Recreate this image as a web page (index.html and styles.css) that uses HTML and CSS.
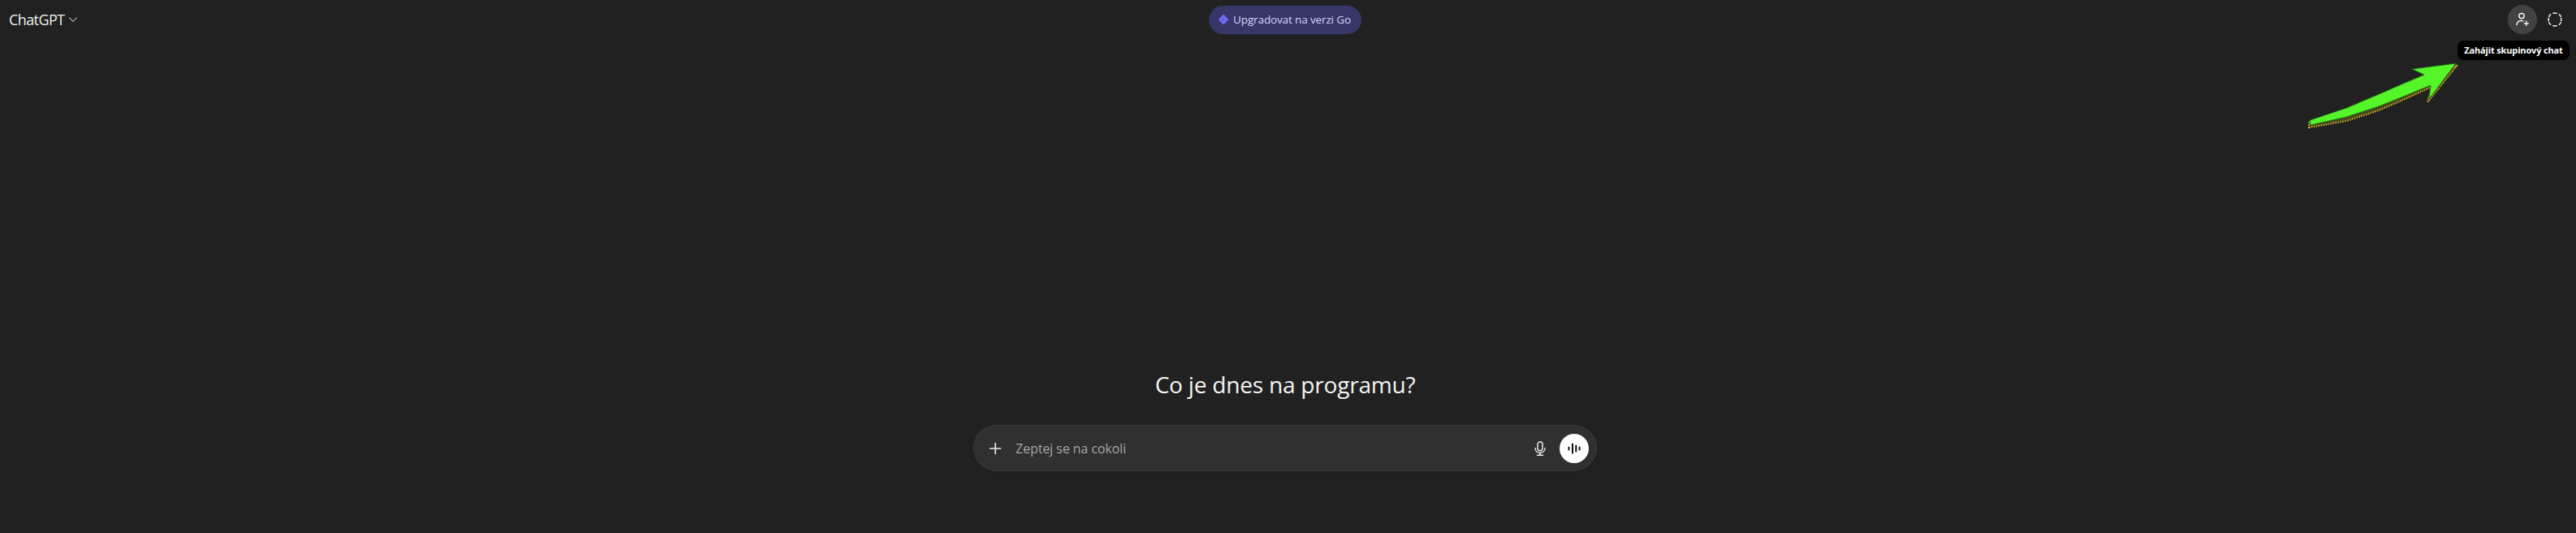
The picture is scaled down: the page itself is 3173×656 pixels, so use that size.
FILE: index.html
```html
<!DOCTYPE html>
<html lang="cs">
<head>
<meta charset="utf-8">
<title>ChatGPT</title>
<link rel="stylesheet" href="styles.css">
</head>
<body>
<div class="page">
  <header class="topbar">
    <div class="topbar-left">
      <span class="model">ChatGPT</span>
      <svg class="chevron" width="12" height="12" viewBox="0 0 12 12" fill="none"><path d="M1.5 3.8 6 8.3l4.500-4.500" stroke="#a8a8a8" stroke-width="1.2" stroke-linecap="round" stroke-linejoin="round"/></svg>
    </div>
    <div class="upgrade">
      <svg width="14" height="14" viewBox="0 0 14 14"><path d="M7 2 12 7 7 12 2 7Z" fill="#6f6cf0" stroke="#6f6cf0" stroke-width="2" stroke-linejoin="round"/><path d="M5.400 7h3.200" stroke="#4a48b0" stroke-width="1"/></svg>
      <span>Upgradovat na verzi Go</span>
    </div>
    <div class="topbar-right">
      <div class="iconbtn active">
        <svg width="20" height="20" viewBox="0 0 20 20" fill="none" stroke="#f0f0f0" stroke-width="1.500" stroke-linecap="round"><circle cx="9" cy="5.600" r="3.200"/><path d="M3 16.500c.3-3.200 2.600-5 5.600-5 .9 0 1.600.1 2.300.4"/><path d="M14.800 12.200v5M12.300 14.700h5"/></svg>
      </div>
      <div class="iconbtn">
        <svg width="20" height="20" viewBox="0 0 20 20" fill="none" stroke="#e8e8e8" stroke-width="1.600" stroke-linecap="round"><path d="M7.800 2.300h4.400"/><path d="M15.400 3.800c.9.7 1.500 1.500 1.800 2.600"/><path d="M17.700 8.600v2.800"/><path d="M17.200 13.600c-.3 1.100-.9 1.900-1.800 2.600"/><path d="M12.200 17.700H7.800"/><path d="M4.600 16.200c-.9-.7-1.500-1.500-1.800-2.600"/><path d="M2.300 11.400V8.600"/><path d="M2.800 6.400c.3-1.100.9-1.900 1.800-2.600"/></svg>
      </div>
    </div>
  </header>
  <main class="content">
    <h1 class="title">Co je dnes na programu?</h1>
    <div class="composer">
      <svg class="plus" width="20" height="20" viewBox="0 0 20 20" fill="none" stroke="#ececec" stroke-width="1.600" stroke-linecap="round"><path d="M10 3.500v13M3.500 10h13"/></svg>
      <span class="placeholder">Zeptej se na cokoli</span>
      <svg class="mic" width="20" height="20" viewBox="0 0 20 20" fill="none" stroke="#e8e8e8" stroke-width="1.500" stroke-linecap="round"><rect x="7" y="1.800" width="6" height="11" rx="3"/><path d="M4 9.500c0 3.500 2.700 5.800 6 5.800s6-2.300 6-5.800"/><path d="M10 15.300v2.700M6.500 18.200h7"/></svg>
      <div class="voice">
        <svg width="20" height="20" viewBox="0 0 20 20" fill="none" stroke="#0d0d0d" stroke-width="2" stroke-linecap="round"><path d="M3.500 8.500v3M8 4.500v11M12.300 6.500v7M16.600 8.500v3"/></svg>
      </div>
    </div>
  </main>
  <div class="tooltip">Zahájit skupinový chat</div>
  <svg class="arrow" width="220" height="110" viewBox="0 0 220 110" fill="none">
    <path d="M14 97 L60 89 L100 76 L130 63 L165 47 L160 66 L197 20 L160 40 L100 60 L14 90 Z" fill="#4a4a1c" stroke="#d4b22e" stroke-width="2" stroke-dasharray="1.500 1.500"/>
    <path d="M15 88 L60 73 L100 56 L130 43 L156 32 L141 25 L195 18 L162 62 L164 45 L130 59 L100 71 L60 84 L16 94 Z" fill="#56f52a" stroke="#1f6a12" stroke-width="1" stroke-linejoin="round"/>
  </svg>
</div>
</body>
</html>
```
FILE: styles.css
```css
html, body {
  margin: 0;
  padding: 0;
  height: 100%;
  background: #212121;
  overflow: hidden;
}
.page {
  position: relative;
  height: 100%;
  display: flex;
  flex-direction: column;
  font-family: "Open Sans", "Noto Sans", sans-serif;
  color: #ececec;
}
.topbar {
  display: grid;
  grid-template-columns: 1fr auto 1fr;
  align-items: center;
  height: 48px;
  padding: 0 8px 0 1px;
}
.topbar-left {
  display: flex;
  align-items: center;
  gap: 5px;
  padding-left: 10px;
}
.model {
  font-size: 18px;
  letter-spacing: -0.6px;
  color: #f0f0f0;
}
.upgrade {
  display: flex;
  align-items: center;
  gap: 5px;
  height: 35px;
  padding: 0 13px 0 11px;
  border-radius: 18px;
  background: #373669;
  color: #d6d5f7;
  font-size: 13.500px;
  letter-spacing: -0.13px;
}
.topbar-right {
  display: flex;
  justify-content: flex-end;
  align-items: center;
  gap: 4px;
}
.iconbtn {
  width: 36px;
  height: 36px;
  border-radius: 50%;
  display: flex;
  align-items: center;
  justify-content: center;
}
.iconbtn.active {
  background: #424242;
}
.content {
  flex: 1;
  display: flex;
  flex-direction: column;
  align-items: center;
  justify-content: flex-end;
  padding-bottom: 76px;
  padding-right: 7px;
}
.title {
  margin: 0 0 32px;
  font-size: 28px;
  font-weight: 400;
  line-height: 36px;
  letter-spacing: -0.2px;
  color: #f5f5f5;
}
.composer {
  box-sizing: border-box;
  width: 768px;
  height: 57px;
  display: flex;
  align-items: center;
  padding: 0 10px 0 17px;
  border-radius: 29px;
  background: #303030;
  box-shadow: 0 1px 2px rgba(0,0,0,.25), inset 0 0 0 1px #3a3a3a;
}
.plus {
  flex: none;
}
.placeholder {
  flex: 1;
  margin-left: 15px;
  font-size: 16px;
  letter-spacing: -0.1px;
  color: #a6a6a6;
}
.mic {
  flex: none;
  margin-right: 14px;
}
.voice {
  width: 36px;
  height: 36px;
  border-radius: 50%;
  background: #fff;
  display: flex;
  align-items: center;
  justify-content: center;
}
.tooltip {
  position: absolute;
  left: 3027px;
  top: 50px;
  box-sizing: border-box;
  width: 138px;
  height: 24px;
  line-height: 24px;
  text-align: center;
  border-radius: 8px;
  background: #000;
  color: #fff;
  font-size: 11px;
  font-weight: 700;
  letter-spacing: -0.15px;
}
.arrow {
  position: absolute;
  left: 2830px;
  top: 60px;
}
```
